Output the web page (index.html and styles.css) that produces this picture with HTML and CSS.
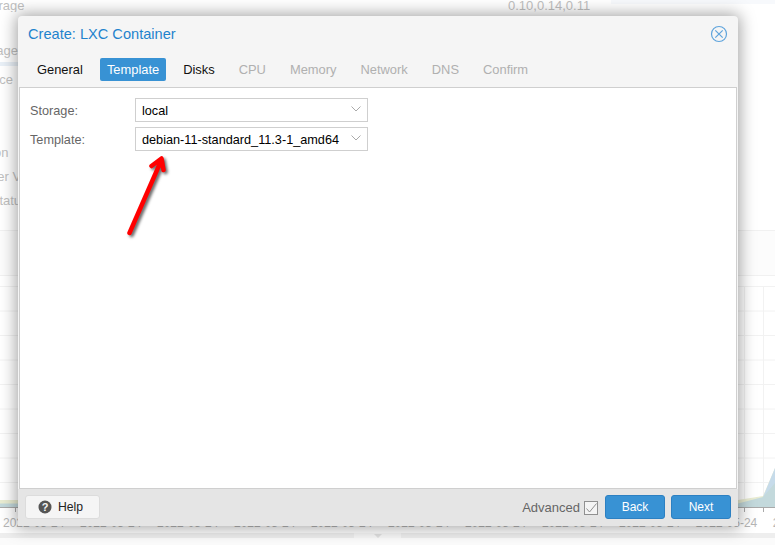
FILE: index.html
```html
<!DOCTYPE html>
<html lang="en">
<head>
<meta charset="utf-8">
<title>Create: LXC Container</title>
<link rel="stylesheet" href="styles.css">
</head>
<body>
<div class="page">
  <section class="summary">
    <div class="topbar"></div>
    <div class="row row-load"><span class="key key-a">Load average</span><span class="val">0.10,0.14,0.11</span></div>
    <div class="row row-ram"><span class="key key-b">RAM usage</span></div>
    <div class="meter"></div>
    <div class="row row-hd"><span class="key key-c">HD space</span></div>
    <div class="row row-kernel"><span class="key key-d">Kernel Version</span></div>
    <div class="row row-line"><span class="key key-e">PVE Manager Version</span></div>
    <div class="row row-line"><span class="key key-f">Repository Status</span></div>
  </section>
  <div class="chart-head"></div>
  <svg class="chart" width="775" height="228" viewBox="0 286 775 228" aria-hidden="true">
    <g class="grid">
      <path d="M0 286.5H775M0 311H775M0 335.5H775M0 360H775M0 384.5H775M0 409H775M0 433.5H775M0 458H775M0 482.5H775"/>
      <path d="M744.5 286V508M763.5 286V508"/>
    </g>
    <path class="area-y" d="M0 500L738 500L763 496L775 468V508H0Z"/>
    <path class="area-a" d="M763 497L775 468V508H763Z"/>
    <path class="area-b" d="M0 503.500H738L763 497L775 483V508H0Z"/>
    <path class="axis" d="M0 507.500H775M15.500 508V512M744.500 508V512M763.500 508V512"/>
  </svg>
  <div class="axis-labels">
    <span>2022-05-24</span><span>2022-05-24</span><span>2022-05-24</span><span>2022-05-24</span><span>2022-05-24</span>
    <span>2022-05-24</span><span>2022-05-24</span><span>2022-05-24</span><span>2022-05-24</span><span>2022-05-24</span><span>2022-05-24</span>
  </div>
  <div class="strip"><span class="strip-tab"><span class="strip-caret"></span></span></div>
  <div class="rest"></div>
</div>

<div class="window" role="dialog" aria-label="Create: LXC Container">
  <header class="win-head">
    <h1 class="win-title">Create: LXC Container</h1>
    <svg class="close" width="18" height="18" viewBox="0 0 18 18" aria-label="Close">
      <circle cx="9" cy="9" r="7.500"/>
      <path d="M5.300 5.300L12.700 12.700M12.700 5.300L5.300 12.700"/>
    </svg>
  </header>
  <nav class="tabs">
    <span class="tab">General</span>
    <span class="tab is-active">Template</span>
    <span class="tab">Disks</span>
    <span class="tab is-off">CPU</span>
    <span class="tab is-off">Memory</span>
    <span class="tab is-off">Network</span>
    <span class="tab is-off">DNS</span>
    <span class="tab is-off">Confirm</span>
  </nav>
  <main class="body">
    <div class="field">
      <label class="field-label">Storage:</label>
      <div class="select"><span class="select-text">local</span>
        <svg class="chev" width="10" height="6" viewBox="0 0 10 6"><path d="M.5.5L5 5L9.500.5"/></svg>
      </div>
    </div>
    <div class="field">
      <label class="field-label">Template:</label>
      <div class="select"><span class="select-text">debian-11-standard_11.3-1_amd64</span>
        <svg class="chev" width="10" height="6" viewBox="0 0 10 6"><path d="M.5.5L5 5L9.500.5"/></svg>
      </div>
    </div>
  </main>
  <footer class="foot">
    <button class="btn btn-help" type="button">
      <svg width="14" height="14" viewBox="0 0 14 14" aria-hidden="true">
        <circle cx="7" cy="7" r="6.500" class="help-disc"/>
        <text x="7" y="11" text-anchor="middle" class="help-q">?</text>
      </svg>
      <span>Help</span>
    </button>
    <div class="foot-right">
      <span class="adv">Advanced</span>
      <svg class="check" width="14" height="14" viewBox="0 0 14 14" aria-hidden="true">
        <rect x=".5" y=".5" width="13" height="13"/>
        <path d="M2.500 7.500L5.500 11L12.500 2.500"/>
      </svg>
      <button class="btn btn-primary btn-back" type="button">Back</button>
      <button class="btn btn-primary" type="button">Next</button>
    </div>
  </footer>
</div>

<svg class="arrow" width="60" height="100" viewBox="120 148 60 100" aria-hidden="true">
  <path d="M129.500 233L161 161M151.500 166L161.500 158.500L163.500 170"/>
</svg>
</body>
</html>
```

FILE: styles.css
```css
* { box-sizing: border-box; }
html, body { margin: 0; padding: 0; height: 100%; overflow: hidden; background: #fff; }
body { font-family: "Liberation Sans", Arial, sans-serif; font-size: 12.7px; }

.page { width: 775px; height: 545px; overflow: hidden; color: #bfbfbf; display: flex; flex-direction: column; }

.summary { height: 231px; flex: none; border-bottom: 1px solid #f1f1f1; display: flex; flex-direction: column; position: relative; font-size: 13px; }
.topbar { position: absolute; left: 611px; right: 0; top: 0; height: 4px; background: #f7f9fc; }
.row { display: flex; white-space: nowrap; overflow: hidden; flex: none; }
.key { flex: none; }
.key-a { margin-left: -55px; }
.key-b { margin-left: -50px; }
.key-c { margin-left: -44px; }
.key-d { margin-left: -76px; }
.key-e { margin-left: -72px; }
.key-f { margin-left: -75px; }
.val { position: absolute; left: 508px; top: -1px; }
.row-load { height: 13px; line-height: 13px; margin-top: -1px; }
.row-ram { height: 15px; line-height: 15px; margin-top: 31px; }
.meter { width: 18px; height: 4px; margin-top: 4px; background: #e9f0f7; flex: none; }
.row-hd { height: 15px; line-height: 15px; margin-top: 6px; }
.row-kernel { height: 24px; line-height: 24px; margin-top: 54px; }
.row-line { height: 24px; line-height: 24px; }

.chart-head { height: 45px; flex: none; border-bottom: 1px solid #f1f1f1; background: #fcfcfc; }
.chart { display: block; margin-top: 10px; flex: none; }
.grid path { fill: none; stroke: #f2f2f2; stroke-width: 1; }
.area-y { fill: #e9ecd2; }
.area-a { fill: #c6dbea; }
.area-b { fill: #c3d9dc; }
.axis { fill: none; stroke: #a9a9a9; stroke-width: 1; }

.axis-labels { display: flex; gap: 15.600px; height: 19px; flex: none; padding-left: 3px; white-space: nowrap; font-size: 12px; line-height: 19px; color: #b6b6b6; }
.axis-labels span { flex: none; }

.strip { height: 5px; flex: none; background: #eeeeee; display: flex; justify-content: center; padding-right: 20px; }
.strip-tab { width: 47px; background: #f7f7f7; display: flex; justify-content: center; }
.strip-caret { width: 0; height: 0; border: 4px solid transparent; border-top-color: #e0e0e0; border-bottom: 0; margin-top: 1px; }
.rest { flex: 1; background: #fbfbfb; }

.window {
  position: absolute; left: 18px; top: 16px; width: 720px; height: 510px;
  display: flex; flex-direction: column; padding: 0 1px;
  background: #f5f5f5; border-radius: 4px 4px 0 0;
  box-shadow: 0 0 16px 2px rgba(0, 0, 0, .36);
}
.win-head { display: flex; align-items: center; justify-content: space-between; height: 35px; padding: 0 9px; flex: none; }
.win-title { margin: 1px 0 0; font-size: 14.600px; font-weight: 400; color: #1f83cd; line-height: 35px; }
.close { flex: none; margin-top: 1px; }
.close circle, .close path { fill: none; stroke: #5fa4dc; stroke-width: 1.200; }

.tabs { display: flex; gap: 10px; height: 36px; padding: 7px 0 0 11px; flex: none; font-size: 12.900px; }
.tab { height: 23px; line-height: 24px; padding: 0 7px; border-radius: 2px; color: #111; white-space: nowrap; }
.tab.is-active { background: #3892d4; color: #fff; }
.tab.is-off { color: #b0b0b0; }

.body { flex: 1; min-height: 0; background: #fff; border: 1px solid #cfcfcf; padding: 10px 10px 0; display: flex; flex-direction: column; gap: 5px; }
.field { display: flex; align-items: center; height: 24px; }
.field-label { width: 105px; flex: none; color: #666; padding-top: 2px; }
.select { width: 233px; height: 24px; border: 1px solid #cfcfcf; background: #fff; color: #000; display: flex; align-items: center; justify-content: space-between; padding: 0 6px; white-space: nowrap; line-height: 22px; }
.select-text { padding-top: 1px; }
.chev { flex: none; margin-bottom: 2px; }
.chev path { fill: none; stroke: #aaa; stroke-width: 1; }

.foot { height: 37px; flex: none; margin: 0 -1px; background: #e5e5e5; display: flex; align-items: center; justify-content: space-between; padding: 0 7px 1px; }
.foot-right { display: flex; align-items: center; }
.btn { font: inherit; height: 24px; padding: 0; border-radius: 3px; cursor: pointer; line-height: 20px; }
.btn-help { width: 75px; background: #f5f5f5; border: 1px solid #dcdcdc; color: #222; font-size: 12.200px; display: flex; align-items: center; padding-left: 12px; gap: 6px; }
.help-disc { fill: #555; }
.help-q { fill: #f5f5f5; font-size: 11px; font-weight: 700; font-family: "Liberation Sans", Arial, sans-serif; }
.adv { color: #666; font-size: 13px; margin-right: 4px; }
.check { flex: none; margin-top: 1px; }
.check rect { fill: #f4f4f4; stroke: #909090; }
.check path { fill: none; stroke: #909090; stroke-width: 1; }
.btn-primary { width: 60px; margin-left: 6px; background: #3892d4; border: 1px solid #2c80c2; color: #fff; font-size: 12px; }
.btn-back { margin-left: 7px; }

.arrow { position: absolute; left: 120px; top: 148px; overflow: visible; filter: drop-shadow(2px 2px 1.500px rgba(0, 0, 0, .6)); }
.arrow path { fill: none; stroke: #f00; stroke-width: 4.500; stroke-linecap: round; stroke-linejoin: round; }
```
